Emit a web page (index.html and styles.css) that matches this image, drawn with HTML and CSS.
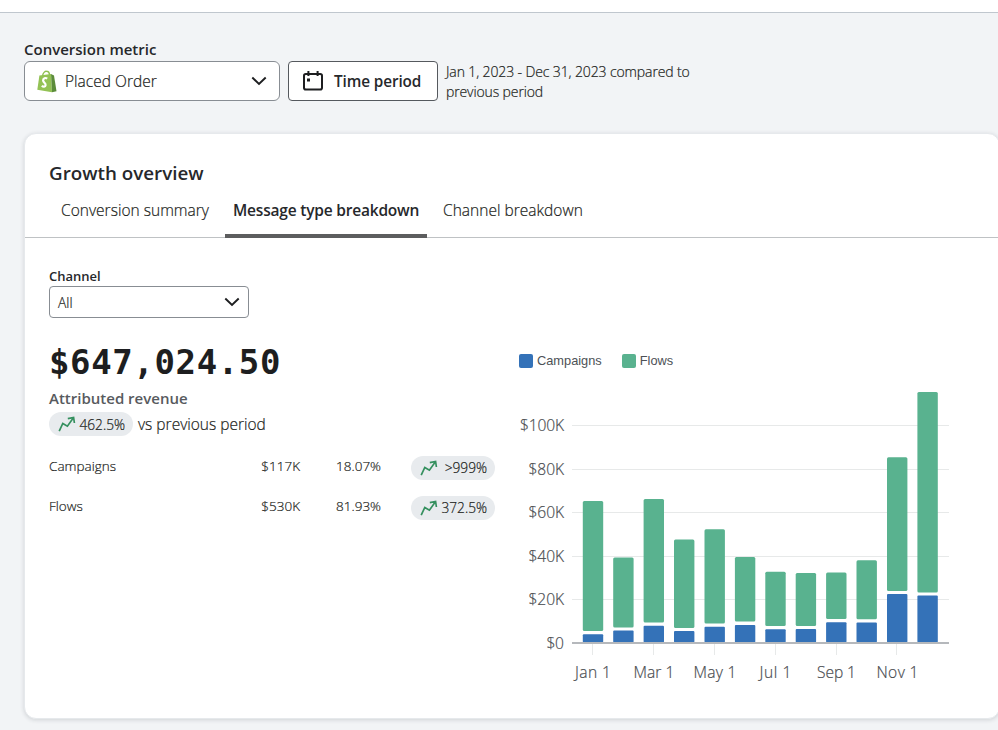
FILE: index.html
```
<!DOCTYPE html>
<html lang="en">
<head>
<meta charset="utf-8">
<title>Growth overview</title>
<link rel="stylesheet" href="styles.css">
</head>
<body>
<svg class="defs" width="0" height="0" aria-hidden="true">
  <symbol id="trend" viewBox="0 0 18 18"><path d="M1.2 16.2 L4.8 8.4 L9.4 11.2 L15.4 2.8 M9.8 3.6 L15.6 2.5 L16.4 8" fill="none" stroke="#35905f" stroke-width="1.7"/></symbol>
  <symbol id="chevron" viewBox="0 0 16 10"><path d="M1.3 1.5 L8 8 L14.7 1.5" fill="none" stroke="#1d1e20" stroke-width="1.9"/></symbol>
</svg>
<header class="topbar"></header>
<main class="page">
  <section class="filters">
    <div class="metric">
      <label class="metric-label"><span>Conversion metric</span></label>
      <div class="select select-metric">
        <svg class="shop" width="20" height="23" viewBox="0 0 20 23">
          <path d="M5.5 6 C6 3 8 1.2 9.5 1.3 C11.5 1.3 12.4 3 12.6 5" fill="none" stroke="#8fc052" stroke-width="1.5"/>
          <path d="M2.4 5.6 L14 3.9 L15 22.3 L.3 19.8 Z" fill="#93c255"/>
          <path d="M14 3.9 L17 5.5 L19.5 21.3 L15 22.3 Z" fill="#5c8c3a"/>
          <path d="M10.2 8.6 C8.6 7.4 6 8.2 6.1 10.4 C6.2 12.7 8.8 13 8.6 15.1 C8.4 17.1 6.2 17 4.8 15.7" fill="none" stroke="#fff" stroke-width="2.2"/>
        </svg>
        <span class="metric-value">Placed Order</span>
        <svg class="chev" width="16" height="10"><use href="#chevron"/></svg>
      </div>
    </div>
    <button class="period">
      <svg width="22" height="20" viewBox="0 0 22 20"><rect x="2" y="3" width="18" height="15.5" rx="1.8" fill="none" stroke="#1d1e20" stroke-width="2"/><path d="M6.4 0 V5 M15.6 0 V5" stroke="#1d1e20" stroke-width="2"/><rect x="5" y="7.5" width="3" height="3" fill="#1d1e20"/></svg>
      <span class="period-text">Time period</span>
    </button>
    <p class="range">Jan 1, 2023 - Dec 31, 2023 compared to<br>previous period</p>
  </section>

  <section class="card">
    <h1 class="title"><span>Growth overview</span></h1>
    <nav class="tabs">
      <a class="tab tab-summary"><span>Conversion summary</span></a>
      <a class="tab tab-active"><span>Message type breakdown</span></a>
      <a class="tab tab-channel"><span>Channel breakdown</span></a>
    </nav>
    <div class="body">
      <div class="left">
        <label class="channel-label"><span>Channel</span></label>
        <div class="select select-channel"><span>All</span><svg class="chev" width="16" height="10"><use href="#chevron"/></svg></div>
        <div class="amount">$647,024.50</div>
        <div class="caption"><span>Attributed revenue</span></div>
        <div class="change"><span class="pill"><svg width="18" height="18"><use href="#trend"/></svg><span>462.5%</span></span><span class="versus">vs previous period</span></div>
        <div class="breakdown">
          <div class="row"><span class="name">Campaigns</span><span class="money">$117K</span><span class="share">18.07%</span><span class="pill"><svg width="18" height="18"><use href="#trend"/></svg><span>&gt;999%</span></span></div>
          <div class="row"><span class="name">Flows</span><span class="money">$530K</span><span class="share">81.93%</span><span class="pill"><svg width="18" height="18"><use href="#trend"/></svg><span>372.5%</span></span></div>
        </div>
      </div>
      <div class="chart">
        <div class="legend"><span class="key"><i class="swatch blue"></i>Campaigns</span><span class="key"><i class="swatch green"></i>Flows</span></div>
        <svg class="plot" width="440" height="310" viewBox="515 380 440 310">
          <path class="grid" d="M572 425.5H949 M572 469.5H949 M572 512.5H949 M572 556.5H949 M572 599.5H949 M592.5 644V655 M653.5 644V655 M714.5 644V655 M775.5 644V655 M836.5 644V655 M896.5 644V655"/>
          <g class="flows">
            <rect x="582.8" y="501" width="20.4" height="130" rx="1.5"/>
            <rect x="613.2" y="557.6" width="20.4" height="69.8" rx="1.5"/>
            <rect x="643.6" y="499" width="20.4" height="123.5" rx="1.5"/>
            <rect x="674" y="539.5" width="20.4" height="88.6" rx="1.5"/>
            <rect x="704.5" y="529.3" width="20.4" height="94.2" rx="1.5"/>
            <rect x="734.9" y="557" width="20.4" height="64.6" rx="1.5"/>
            <rect x="765.3" y="571.8" width="20.4" height="54.2" rx="1.5"/>
            <rect x="795.7" y="573" width="20.4" height="53" rx="1.5"/>
            <rect x="826.1" y="572.5" width="20.4" height="46.5" rx="1.5"/>
            <rect x="856.5" y="560.3" width="20.4" height="59" rx="1.5"/>
            <rect x="887" y="457.3" width="20.4" height="133.6" rx="1.5"/>
            <rect x="917.4" y="392" width="20.4" height="200.4" rx="1.5"/>
          </g>
          <g class="campaigns">
            <rect x="582.8" y="634.2" width="20.4" height="8.3" rx="1"/>
            <rect x="613.2" y="630.4" width="20.4" height="12.1" rx="1"/>
            <rect x="643.6" y="625.8" width="20.4" height="16.7" rx="1"/>
            <rect x="674" y="631.1" width="20.4" height="11.4" rx="1"/>
            <rect x="704.5" y="626.7" width="20.4" height="15.8" rx="1"/>
            <rect x="734.9" y="625" width="20.4" height="17.5" rx="1"/>
            <rect x="765.3" y="629.3" width="20.4" height="13.2" rx="1"/>
            <rect x="795.7" y="629" width="20.4" height="13.5" rx="1"/>
            <rect x="826.1" y="622.2" width="20.4" height="20.3" rx="1"/>
            <rect x="856.5" y="622.4" width="20.4" height="20.1" rx="1"/>
            <rect x="887" y="594" width="20.4" height="48.5" rx="1"/>
            <rect x="917.4" y="595.6" width="20.4" height="46.9" rx="1"/>
          </g>
          <path class="base" d="M572 643H949"/>
          <g class="ylab">
            <text x="564" y="431" textLength="44">$100K</text>
            <text x="564" y="475" textLength="35.5">$80K</text>
            <text x="564" y="518" textLength="35.5">$60K</text>
            <text x="564" y="562" textLength="35.5">$40K</text>
            <text x="564" y="605" textLength="35.5">$20K</text>
            <text x="564" y="649" textLength="17.5">$0</text>
          </g>
          <g class="xlab">
            <text x="593" y="678" textLength="36">Jan 1</text>
            <text x="654" y="678" textLength="41">Mar 1</text>
            <text x="715" y="678" textLength="43">May 1</text>
            <text x="775.5" y="678" textLength="32">Jul 1</text>
            <text x="836.5" y="678" textLength="39">Sep 1</text>
            <text x="897.5" y="678" textLength="42">Nov 1</text>
          </g>
        </svg>
      </div>
    </div>
  </section>
</main>
</body>
</html>
```
FILE: styles.css
```
* { box-sizing: border-box; }
body { margin: 0; height: 730px; overflow: hidden; background: #f2f4f6; color: #26282b; font-family: "Open Sans", "Noto Sans", sans-serif; font-size: 15px; font-weight: 350; white-space: nowrap; }
.metric-value, .range, .tab-summary, .tab-channel, .versus, .row, .pill, .select-channel { color: #1c1e20; -webkit-text-stroke: .2px currentColor; }
.defs { position: absolute; }
.topbar { height: 13px; background: #fff; border-bottom: 1px solid #c0c7ce; }
.page { padding: 25px 0 0 24px; }
.filters { display: flex; height: 95px; }
.metric { width: 256px; }
.metric-label { display: block; height: 23px; line-height: 23px; font-size: 15px; font-weight: 550; }
.select { display: flex; align-items: center; background: #fff; border: 1px solid #888d93; border-radius: 4px; }
.chev { margin-left: auto; }
.select-metric { height: 40px; padding: 0 12px 0 12px; border-radius: 6px; }
.shop { margin-right: 8px; }
.metric-value { font-size: 15.5px; letter-spacing: .02px; }
.period { display: flex; align-items: center; gap: 10px; width: 150px; height: 40px; margin: 23px 8px 0; padding: 0 14px 0 13px; background: #fff; border: 1px solid #55595e; border-radius: 4px; color: #26282b; font: 550 15.3px "Open Sans", sans-serif; letter-spacing: -.1px; }
.range { margin: 23px 0 0; padding-top: 1px; font-size: 14px; line-height: 20px; letter-spacing: -.12px; }
.card { width: 976px; height: 586px; background: #fff; border: 1px solid #e6e9ec; border-radius: 12px; box-shadow: 0 1px 4px rgba(30,40,50,.16); }
.title { margin: 0; padding: 25px 24px 0; height: 52px; line-height: 28px; font-size: 18.8px; font-weight: 550; }
.tabs { display: flex; height: 52px; padding-left: 24px; border-bottom: 1px solid #bfc2c4; }
.tab { height: 52px; line-height: 48px; padding: 0 12px; font-size: 15.5px; letter-spacing: .02px; }
.tab-summary { width: 176px; }
.tab-active { width: 202px; padding: 0 8px; font-weight: 600; border-bottom: 4px solid #5c5d5e; border-radius: 2px 2px 0 0; letter-spacing: -.2px; }
.tab-channel { padding: 0 16px; }
.body { display: flex; padding: 28px 0 0 24px; }
.left { width: 446px; flex: none; }
.channel-label { display: block; height: 20px; line-height: 20px; font-size: 13px; font-weight: 550; }
.select-channel { width: 200px; height: 32px; padding: 0 8px; font-size: 13.8px; }
.amount { height: 66px; padding-top: 22px; font: 700 34px/44px "DejaVu Sans Mono", monospace; letter-spacing: .62px; color: #1d1e20; }
.caption { height: 26px; padding-top: 1px; line-height: 26px; font-weight: 550; font-size: 15px; color: #575a5e; }
.change { display: flex; align-items: center; gap: 5px; height: 24px; margin-top: 2px; }
.pill { display: inline-flex; align-items: center; justify-content: space-between; width: 84px; height: 24px; padding: 0 8px 0 9px; border-radius: 12px; background: #e8ebee; font-size: 13.7px; }
.versus { font-size: 15.5px; }
.breakdown { margin-top: 10px; }
.row { display: grid; grid-template-columns: 191px 60px 81px 30px 84px; height: 40px; line-height: 40px; font-size: 13.5px; }
.row .name { grid-column: 1; }
.money { grid-column: 2; text-align: right; }
.share { grid-column: 3; text-align: right; }
.row .pill { grid-column: 5; margin-top: 10px; line-height: 24px; }
.chart { padding-top: 86px; margin-left: 20px; }
.legend { display: flex; gap: 20px; height: 17px; align-items: center; padding-left: 4px; font: 12.8px "Liberation Sans", Arial, sans-serif; color: #4d5156; }
.key { display: flex; align-items: center; gap: 4px; }
.swatch { width: 14px; height: 14px; border-radius: 2px; }
.blue { background: #3472b8; }
.green { background: #59b28f; }
.plot { display: block; margin-top: 11px; }
.grid { fill: none; stroke: #e7e9e9; }
.base { fill: none; stroke: #b5b8bc; stroke-width: 2; }
.flows { fill: #59b28f; }
.campaigns { fill: #3472b8; }
.ylab, .xlab { font-size: 15.6px; fill: #4a4d51; stroke: #4a4d51; stroke-width: .2px; }
.ylab { text-anchor: end; }
.xlab { text-anchor: middle; }
```
